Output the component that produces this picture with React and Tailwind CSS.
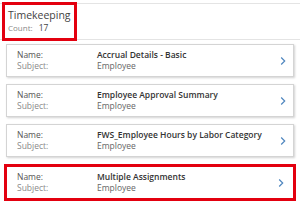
import React from 'react';

const reports = [
  { id: 1, name: 'Accrual Details - Basic', subject: 'Employee' },
  { id: 2, name: 'Employee Approval Summary', subject: 'Employee' },
  { id: 3, name: 'FWS_Employee Hours by Labor Category', subject: 'Employee' },
  { id: 4, name: 'Multiple Assignments', subject: 'Employee', highlighted: true },
];

const Chevron = () => (
  <svg width="6" height="10" viewBox="0 0 6 10" fill="none" className="shrink-0">
    <path d="M1.2 1.5 L4.7 5 L1.2 8.5" stroke="#4f86bf" strokeWidth="1.2" />
  </svg>
);

const ReportCard = ({ report }) => {
  // highlighted card gets the red annotation frame instead of the grey border
  const frame = report.highlighted
    ? 'mx-[4px] border-[3px] border-[#e3000f] h-[37px] pl-[10px] pr-[9px]'
    : 'mx-[6px] border border-[#d4d4d4] shadow-[1px_1px_2px_rgba(0,0,0,0.18)] h-[33px] pl-[10px] pr-[7px]';

  return (
    <div className={`flex items-center bg-white ${frame}`}>
      <div className="flex flex-col text-[8.5px] leading-[10.5px] w-[80px] shrink-0">
        <span className="text-[#555]">Name:</span>
        <span className="text-[#8a8a8a]">Subject:</span>
      </div>
      <div className="flex flex-col flex-1 text-[8.5px] leading-[10.5px] min-w-0">
        <span className="font-semibold text-[#333] whitespace-nowrap">{report.name}</span>
        <span className="text-[#666]">{report.subject}</span>
      </div>
      <Chevron />
    </div>
  );
};

const App = () => {
  return (
    <div
      className="w-[300px] h-[205px] bg-white overflow-hidden"
      style={{ fontFamily: '"Open Sans", "Noto Sans", sans-serif' }}
    >
      {/* Header */}
      <div className="mt-[3px] h-[37px] border-y border-[#e4e4e4] flex">
        <div className="-mt-[2px] ml-[2px] w-[75px] h-[39px] border-[3px] border-[#e3000f] pl-[3px] pt-[4px]">
          <div className="text-[10.5px] leading-[13px] text-[#444]">Timekeeping</div>
          <div className="text-[8px] leading-[11px] text-[#8a8a8a]">
            Count:<span className="ml-[6px] text-[8.5px] text-[#444]">17</span>
          </div>
        </div>
      </div>

      {/* Report list */}
      <div className="mt-[4px] flex flex-col gap-[7px]">
        {reports.map((report) => (
          <ReportCard key={report.id} report={report} />
        ))}
      </div>
    </div>
  );
};

export default App;
